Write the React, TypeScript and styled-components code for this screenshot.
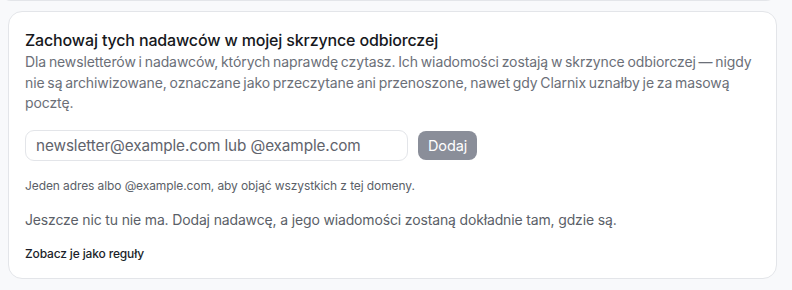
import React, { useState } from "react";
import styled, { createGlobalStyle } from "styled-components";

const GlobalStyle = createGlobalStyle`
  body {
    margin: 0;
    background-color: #f8f9fb;
    font-family: Inter, "Noto Sans", sans-serif;
    color: #111827;
  }
`;

const Page = styled.div`
  display: flex;
  flex-direction: column;
  gap: 10px;
  padding: 0 15px 12px 8px;
  margin-top: -10px;
`;

const PrevCard = styled.div`
  height: 10px;
  background-color: #ffffff;
  border: 1px solid #e3e5e9;
  border-top: none;
  border-radius: 0 0 14px 14px;
  margin-left: -8px;
`;

const Card = styled.section`
  background-color: #ffffff;
  border: 1px solid #e3e5e9;
  border-radius: 14px;
  padding: 16px 16px 16px 16px;
  display: flex;
  flex-direction: column;
`;

const Title = styled.h2`
  margin: 0;
  font-size: 16px;
  font-weight: 500;
  line-height: 24px;
  color: #16181d;
  letter-spacing: -0.15px;
`;

const Description = styled.p`
  margin: 0;
  max-width: 737px;
  font-size: 14px;
  line-height: 20.5px;
  color: #6b6f78;
  letter-spacing: -0.1px;
  word-spacing: -1px;
`;

const AddRow = styled.div`
  display: flex;
  align-items: center;
  gap: 10px;
  margin-top: 16px;
`;

const EmailInput = styled.input`
  width: 383px;
  height: 31px;
  box-sizing: border-box;
  border: 1px solid #e3e5e9;
  border-radius: 9px;
  padding: 0 10px;
  font-family: inherit;
  font-size: 15.3px;
  color: #111827;
  outline: none;
  letter-spacing: -0.1px;

  &::placeholder {
    color: #5f636c;
  }
`;

const AddButton = styled.button<{ $disabled: boolean }>`
  height: 29px;
  padding: 0 10px;
  border: none;
  border-radius: 8px;
  background-color: ${(p) => (p.$disabled ? "#8a8e99" : "#374151")};
  color: #ffffff;
  font-family: inherit;
  font-size: 14.5px;
  letter-spacing: -0.1px;
  cursor: pointer;
`;

const Hint = styled.p`
  margin: 17px 0 0 0;
  font-size: 12px;
  line-height: 16px;
  color: #5b5f68;
  letter-spacing: -0.1px;
`;

const EmptyText = styled.p`
  margin: 16px 0 0 0;
  font-size: 14px;
  line-height: 20px;
  color: #5b5f68;
  letter-spacing: -0.15px;
`;

const RulesLink = styled.a`
  margin-top: 16px;
  font-size: 12px;
  line-height: 16px;
  font-weight: 500;
  color: #1b1f2a;
  text-decoration: none;
  letter-spacing: -0.15px;
  cursor: pointer;
`;

export default function App() {
  const [value, setValue] = useState("");

  return (
    <>
      <GlobalStyle />
      <Page>
        <PrevCard />
        <Card>
          <Title>Zachowaj tych nadawców w mojej skrzynce odbiorczej</Title>
          <Description>
            Dla newsletterów i nadawców, których naprawdę czytasz. Ich wiadomości zostają w skrzynce
            odbiorczej — nigdy nie są archiwizowane, oznaczane jako przeczytane ani przenoszone, nawet
            gdy Clarnix uznałby je za masową pocztę.
          </Description>
          <AddRow>
            <EmailInput
              placeholder="newsletter@example.com lub @example.com"
              value={value}
              onChange={(e) => setValue(e.target.value)}
            />
            <AddButton $disabled={value.trim().length === 0}>Dodaj</AddButton>
          </AddRow>
          <Hint>Jeden adres albo @example.com, aby objąć wszystkich z tej domeny.</Hint>
          <EmptyText>
            Jeszcze nic tu nie ma. Dodaj nadawcę, a jego wiadomości zostaną dokładnie tam, gdzie są.
          </EmptyText>
          <RulesLink>Zobacz je jako reguły</RulesLink>
        </Card>
      </Page>
    </>
  );
}
